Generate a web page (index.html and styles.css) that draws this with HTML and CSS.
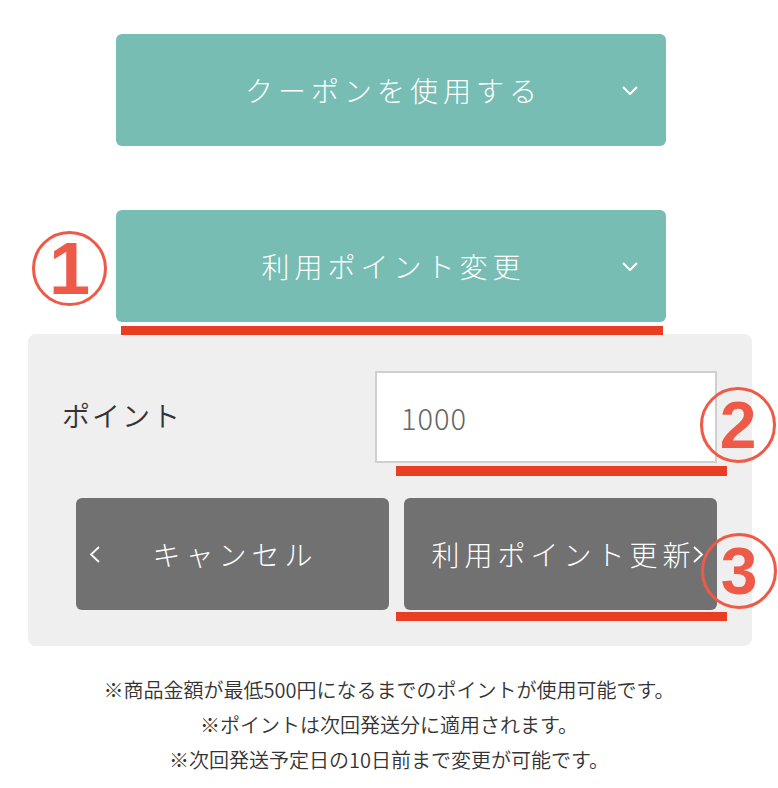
FILE: index.html
```html
<!DOCTYPE html>
<html lang="ja">
<head>
<meta charset="utf-8">
<title>ポイント利用</title>
<link rel="stylesheet" href="styles.css">
</head>
<body>
<main class="page">
  <button class="toggle" type="button">
    <span class="toggle-label">クーポンを使用する</span>
    <svg class="chev-down" width="16" height="9" viewBox="0 0 16 9"><polyline points="1,1 8,8 15,1" fill="none" stroke="#fff" stroke-width="2"/></svg>
  </button>

  <button class="toggle toggle-points" type="button">
    <span class="toggle-label">利用ポイント変更</span>
    <svg class="chev-down" width="16" height="9" viewBox="0 0 16 9"><polyline points="1,1 8,8 15,1" fill="none" stroke="#fff" stroke-width="2"/></svg>
  </button>

  <section class="panel">
    <div class="field-row">
      <label class="field-label" for="pt">ポイント</label>
      <input class="field-input" id="pt" type="text" value="1000">
    </div>
    <div class="actions">
      <button class="btn btn-cancel" type="button">
        <svg class="chev-left" width="11" height="17" viewBox="0 0 11 17"><polyline points="10,1 2,8.5 10,16" fill="none" stroke="#fff" stroke-width="1.8"/></svg>
        <span class="btn-label">キャンセル</span>
      </button>
      <button class="btn btn-update" type="button">
        <span class="btn-label">利用ポイント更新</span>
        <svg class="chev-right" width="11" height="17" viewBox="0 0 11 17"><polyline points="1,1 9,8.5 1,16" fill="none" stroke="#fff" stroke-width="1.8"/></svg>
      </button>
    </div>
  </section>

  <div class="notes">
    <p>※商品金額が最低500円になるまでのポイントが使用可能です。</p>
    <p>※ポイントは次回発送分に適用されます。</p>
    <p>※次回発送予定日の10日前まで変更が可能です。</p>
  </div>

  <span class="mark mark-1"></span>
  <span class="mark mark-2"></span>
  <span class="mark mark-3"></span>
  <span class="num num-1">1</span>
  <span class="num num-2">2</span>
  <span class="num num-3">3</span>
</main>
</body>
</html>
```

FILE: styles.css
```css
* { box-sizing: border-box; }

html, body {
  margin: 0;
  padding: 0;
  background: #fff;
}

body {
  font-family: "Noto Sans CJK JP", "Noto Sans", sans-serif;
  font-weight: 350;
  color: #333;
}

.page {
  position: relative;
  width: 778px;
  padding-top: 34px;
}

.toggle {
  display: grid;
  grid-template-columns: 1fr auto 1fr;
  align-items: center;
  width: 550px;
  height: 112px;
  margin: 0 0 0 116px;
  padding: 0;
  border: 0;
  border-radius: 6px;
  background: #78bdb3;
  color: #fff;
  font-family: inherit;
  font-weight: 300;
  font-size: 28px;
  letter-spacing: 5px;
  cursor: pointer;
}

.toggle-label {
  grid-column: 2;
  padding-left: 5px;
}

.chev-down {
  grid-column: 3;
  justify-self: end;
  margin-right: 28px;
}

.toggle-points {
  margin-top: 64px;
}

.panel {
  width: 724px;
  margin: 12px 0 0 28px;
  padding: 37px 35px 36px 34px;
  border-radius: 8px;
  background: #efefef;
}

.field-row {
  display: flex;
  align-items: center;
  justify-content: space-between;
}

.field-label {
  font-size: 28px;
  font-weight: 350;
  letter-spacing: 2px;
  color: #333;
  margin-top: -4px;
}

.field-input {
  width: 342px;
  height: 92px;
  margin: 0;
  padding: 0 24px;
  border: 2px solid #cfcfcf;
  border-radius: 0;
  background: #fff;
  font-family: "Noto Sans CJK JP", "Noto Sans", sans-serif;
  font-weight: 300;
  font-size: 29px;
  letter-spacing: 1px;
  color: #666;
  outline: none;
}

.actions {
  display: grid;
  grid-template-columns: 313px 313px;
  gap: 15px;
  margin-top: 35px;
  padding-left: 14px;
}

.btn {
  height: 112px;
  margin: 0;
  padding: 0;
  border: 0;
  border-radius: 6px;
  background: #717171;
  color: #fff;
  font-family: inherit;
  font-weight: 300;
  font-size: 28px;
  letter-spacing: 5px;
  cursor: pointer;
}

.btn-cancel {
  display: grid;
  grid-template-columns: 1fr auto 1fr;
  align-items: center;
}

.chev-left {
  grid-column: 1;
  justify-self: start;
  margin-left: 13px;
}

.btn-cancel .btn-label {
  grid-column: 2;
  padding-left: 5px;
}

.btn-update {
  display: flex;
  align-items: center;
  justify-content: center;
  padding-left: 14px;
}

.btn-update .btn-label {
  margin-right: -3px;
}

.notes {
  margin-top: 26px;
  text-align: center;
  font-size: 20px;
  font-weight: 350;
  line-height: 35px;
  color: #333;
}

.notes p {
  margin: 0;
}

/* annotation overlays */
.mark {
  position: absolute;
  height: 10px;
  background: #e83f24;
}
.mark-1 { left: 121px; top: 326px; width: 542px; height: 9px; }
.mark-2 { left: 396px; top: 466px; width: 331px; }
.mark-3 { left: 396px; top: 612px; width: 331px; height: 9px; }

.num {
  position: absolute;
  display: flex;
  align-items: center;
  justify-content: center;
  width: 76px;
  height: 76px;
  border: 3px solid #ee5a48;
  border-radius: 50%;
  font-family: "Liberation Sans", Arial, sans-serif;
  font-weight: bold;
  font-size: 66px;
  line-height: 1;
  color: #ee5a48;
}
.num-1 { left: 32px; top: 231px; width: 75px; height: 75px; font-size: 74px; }
.num-2 { left: 700px; top: 387px; }
.num-3 { left: 701px; top: 533px; }
```
